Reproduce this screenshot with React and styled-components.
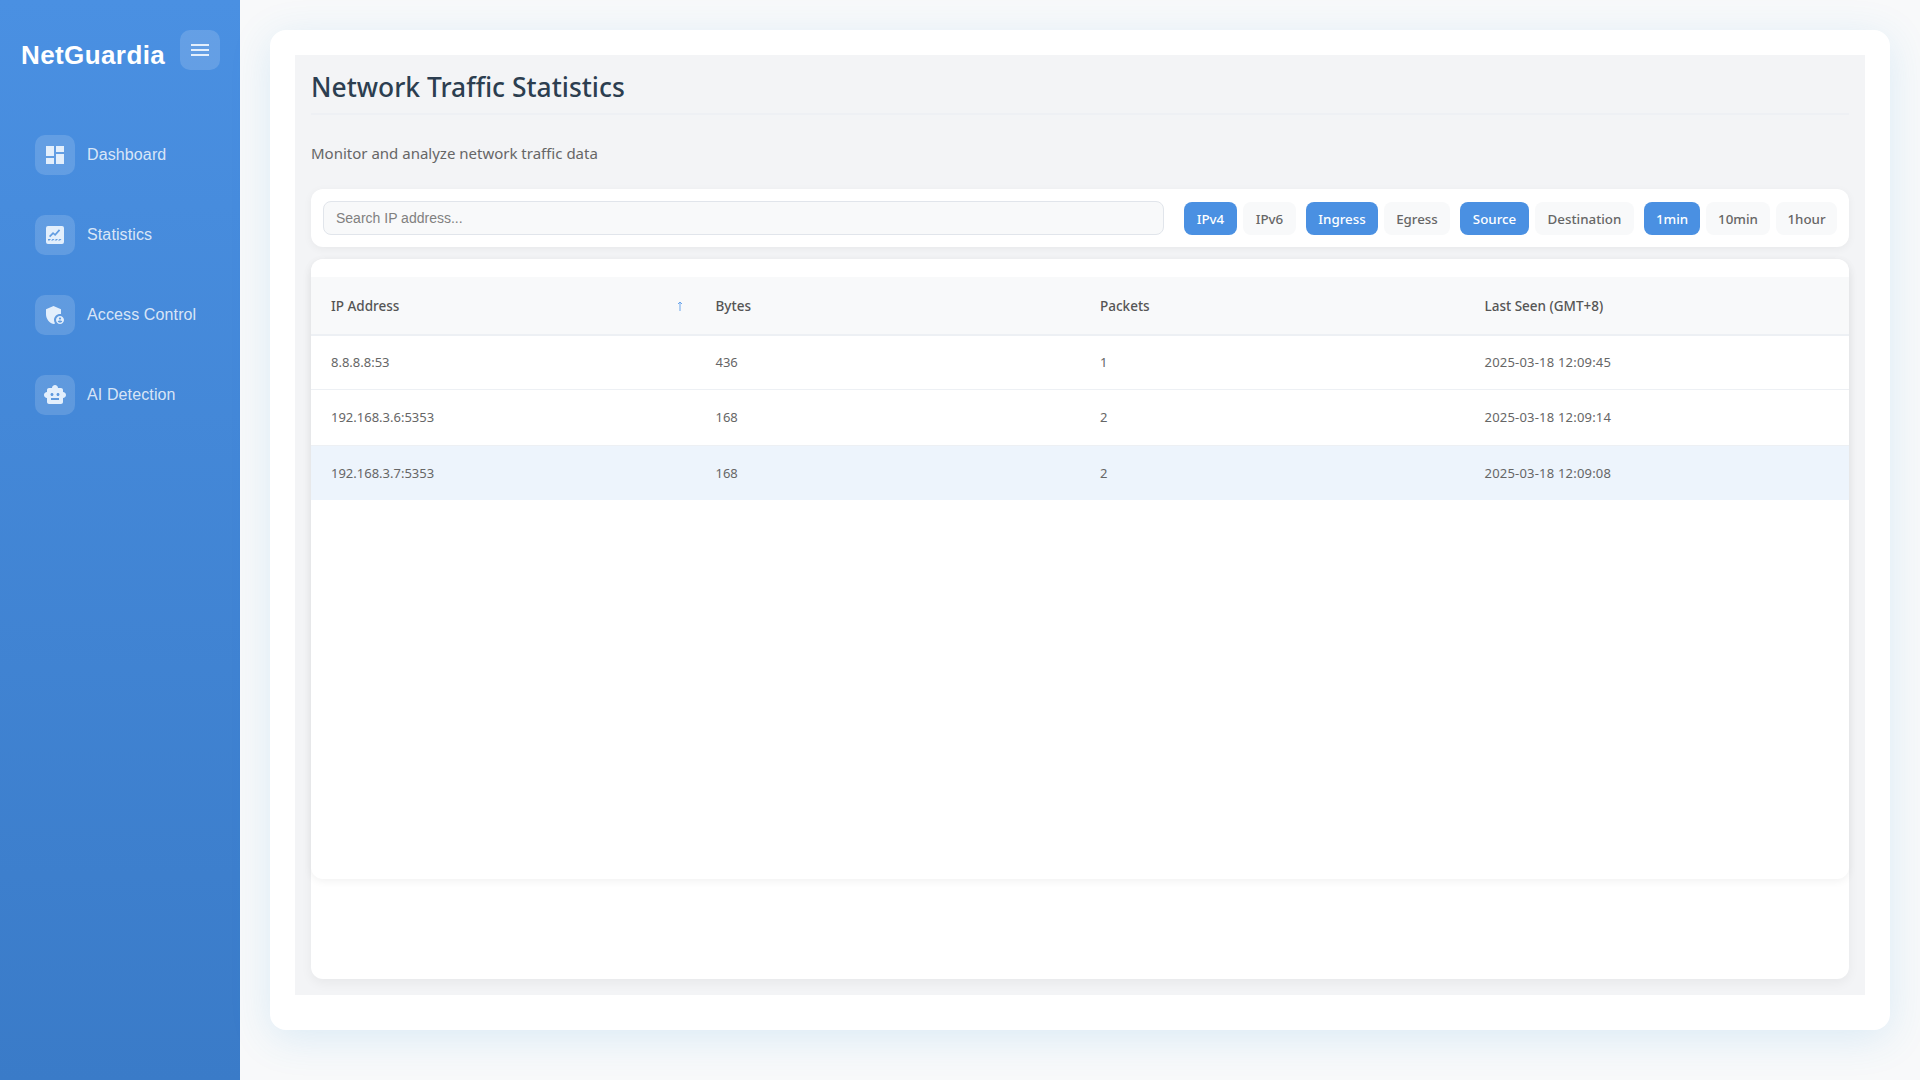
import styled, { createGlobalStyle } from 'styled-components';
import { MdDashboard, MdAdminPanelSettings, MdSmartToy } from 'react-icons/md';

const GlobalStyle = createGlobalStyle`
  html, body {
    margin: 0;
    padding: 0;
    height: 100%;
  }
  body {
    font-family: "Noto Sans", "Open Sans", sans-serif;
    background: #f8f9fa;
  }
  * {
    box-sizing: border-box;
  }
`;

const Layout = styled.div`
  display: flex;
  height: 1080px;
  overflow: hidden;
  background: #f8f9fa;
`;

const Sidebar = styled.aside`
  width: 240px;
  flex: none;
  background: linear-gradient(180deg, #4a90e2 0%, #3a7bc8 100%);
  font-family: "Liberation Sans", Arial, sans-serif;
`;

const Brand = styled.div`
  display: flex;
  align-items: flex-start;
  justify-content: space-between;
  height: 135px;
  padding: 30px 20px 0 21px;
`;

const Logo = styled.h1`
  margin: 9px 0 0;
  font-size: 26px;
  line-height: 32px;
  font-weight: 700;
  color: #fff;
  letter-spacing: 0.4px;
`;

const IconBox = styled.span`
  display: flex;
  align-items: center;
  justify-content: center;
  width: 40px;
  height: 40px;
  flex: none;
  border-radius: 10px;
  background: rgba(255, 255, 255, 0.15);
  color: #e3effc;
  font-size: 24px;
`;

const Nav = styled.nav`
  display: flex;
  flex-direction: column;
  gap: 40px;
  padding-left: 35px;
`;

const NavItem = styled.a`
  display: flex;
  align-items: center;
  gap: 12px;
  height: 40px;
  font-size: 16px;
  letter-spacing: 0.12px;
  color: rgba(255, 255, 255, 0.8);
`;

const Main = styled.main`
  flex: 1;
  min-width: 0;
  padding: 30px 30px 50px;
`;

const Card = styled.div`
  height: 1000px;
  padding: 25px 25px 35px;
  background: #fff;
  border-radius: 16px;
  box-shadow: 0 8px 40px rgba(52, 152, 219, 0.15);
`;

const Page = styled.div`
  height: 100%;
  padding: 16px;
  background: #f3f4f6;
  display: flex;
  flex-direction: column;
`;

const Title = styled.h2`
  margin: 0;
  height: 44px;
  flex: none;
  font-size: 26.4px;
  line-height: 32px;
  font-weight: 500;
  color: #2c3e50;
  border-bottom: 2px solid #eef0f4;
`;

const Subtitle = styled.p`
  margin: 27px 0 25px;
  font-size: 15px;
  line-height: 22px;
  color: #666;
`;

const FilterBar = styled.div`
  display: flex;
  align-items: center;
  flex: none;
  height: 58px;
  padding: 0 12px;
  background: #fff;
  border-radius: 12px;
  box-shadow: 0 2px 8px rgba(0, 0, 0, 0.05);
`;

const Search = styled.input`
  flex: 1;
  min-width: 0;
  height: 34px;
  margin-right: 20px;
  padding: 0 12px;
  border: 1px solid #e1e5eb;
  border-radius: 8px;
  background: #f8f9fa;
  font-family: "Liberation Sans", Arial, sans-serif;
  font-size: 14px;
  color: #333;
  &::placeholder {
    color: #808080;
  }
`;

const Group = styled.div`
  display: flex;
  gap: 6px;
  margin-left: ${(p) => (p.$first ? 0 : '10px')};
`;

const Pill = styled.button`
  width: ${(p) => p.$w}px;
  height: 33px;
  padding: 0;
  border: 0;
  border-radius: 8px;
  font-family: inherit;
  font-size: 13.33px;
  line-height: 34px;
  font-weight: 500;
  background: ${(p) => (p.$active ? '#4a90e2' : '#f8f9fa')};
  color: ${(p) => (p.$active ? '#fff' : '#666')};
`;

const TableCard = styled.div`
  flex: 1;
  margin-top: 12px;
  background: #fff;
  border-radius: 12px;
  box-shadow: 0 4px 12px rgba(0, 0, 0, 0.05);
`;

const TablePanel = styled.div`
  height: 620px;
  padding-top: 18px;
  background: #fff;
  border-radius: 12px;
  box-shadow: 0 2px 8px rgba(0, 0, 0, 0.06);
`;

const Table = styled.table`
  width: 100%;
  border-collapse: separate;
  border-spacing: 0;
  table-layout: fixed;
  font-size: 13px;
`;

const HeadCell = styled.th`
  position: relative;
  height: 59px;
  padding: 1px 20px 0;
  background: #f8f9fa;
  border-bottom: 2px solid #edf0f4;
  text-align: left;
  font-size: 13.5px;
  font-weight: 500;
  color: #555;
`;

const SortMark = styled.svg`
  position: absolute;
  right: 13px;
  top: 24px;
  color: #6aa5eb;
`;

const Row = styled.tr`
  background: ${(p) => (p.$selected ? '#edf4fc' : '#fff')};
`;

const Cell = styled.td`
  height: ${(p) => p.$h}px;
  padding: 0 20px ${(p) => (p.$last ? 0 : '2px')};
  border-bottom: ${(p) => (p.$last ? 0 : '1px solid #edf0f4')};
  letter-spacing: ${(p) => (p.$date ? '0.2px' : 'normal')};
  color: #666;
`;

// no package icon has the hatched area under the line, so it is drawn here
const StatsIcon = () => (
  <svg width="18" height="18" viewBox="0 0 18 18">
    <path
      fill="currentColor"
      fillRule="evenodd"
      d="M2 0h14a2 2 0 0 1 2 2v14a2 2 0 0 1-2 2H2a2 2 0 0 1-2-2V2a2 2 0 0 1 2-2zM3 10l1.200 1.300 3-3 2 1.700 5-5.600-1.300-1.100-3.900 4.400-2-1.700L3 10zM2 13v1.500h1.500L5 13H3.500zm4.500 0L5 14.500h2L8.500 13zm3.500 0-1.500 1.500h2L12 13zm3.500 0-1.500 1.500h2L15.500 13z"
    />
  </svg>
);

const MenuIcon = () => (
  <svg width="18" height="14" viewBox="0 0 18 14" fill="none" stroke="currentColor" strokeWidth="2">
    <path d="M0 2h18M0 7h18M0 12h18" />
  </svg>
);

const navItems = [
  { label: 'Dashboard', icon: <MdDashboard /> },
  { label: 'Statistics', icon: <StatsIcon /> },
  { label: 'Access Control', icon: <MdAdminPanelSettings /> },
  { label: 'AI Detection', icon: <MdSmartToy /> },
];

const filters = [
  [{ label: 'IPv4', w: 53 }, { label: 'IPv6', w: 53 }],
  [{ label: 'Ingress', w: 72 }, { label: 'Egress', w: 66 }],
  [{ label: 'Source', w: 69 }, { label: 'Destination', w: 99 }],
  [{ label: '1min', w: 56 }, { label: '10min', w: 64 }, { label: '1hour', w: 61 }],
];

const rows = [
  { ip: '8.8.8.8:53', bytes: '436', packets: '1', seen: '2025-03-18 12:09:45', h: 54 },
  { ip: '192.168.3.6:5353', bytes: '168', packets: '2', seen: '2025-03-18 12:09:14', h: 56 },
  { ip: '192.168.3.7:5353', bytes: '168', packets: '2', seen: '2025-03-18 12:09:08', h: 54, selected: true },
];

export default function App() {
  return (
    <Layout>
      <GlobalStyle />
      <Sidebar>
        <Brand>
          <Logo>NetGuardia</Logo>
          <IconBox><MenuIcon /></IconBox>
        </Brand>
        <Nav>
          {navItems.map((item) => (
            <NavItem key={item.label}>
              <IconBox>{item.icon}</IconBox>
              {item.label}
            </NavItem>
          ))}
        </Nav>
      </Sidebar>
      <Main>
        <Card>
          <Page>
            <Title>Network Traffic Statistics</Title>
            <Subtitle>Monitor and analyze network traffic data</Subtitle>
            <FilterBar>
              <Search placeholder="Search IP address..." />
              {filters.map((group, i) => (
                <Group key={group[0].label} $first={i === 0}>
                  {group.map((pill, j) => (
                    <Pill key={pill.label} $w={pill.w} $active={j === 0}>{pill.label}</Pill>
                  ))}
                </Group>
              ))}
            </FilterBar>
            <TableCard>
              <TablePanel>
                <Table>
                  <thead>
                    <tr>
                      <HeadCell>
                        IP Address
                        <SortMark width="6" height="10" viewBox="0 0 6 10" fill="none" stroke="currentColor">
                          <path d="M3 10V1M1 3l2-2 2 2" />
                        </SortMark>
                      </HeadCell>
                      <HeadCell>Bytes</HeadCell>
                      <HeadCell>Packets</HeadCell>
                      <HeadCell>Last Seen (GMT+8)</HeadCell>
                    </tr>
                  </thead>
                  <tbody>
                    {rows.map((row, i) => {
                      const last = i === rows.length - 1;
                      return (
                        <Row key={row.ip} $selected={row.selected}>
                          <Cell $h={row.h} $last={last}>{row.ip}</Cell>
                          <Cell $h={row.h} $last={last}>{row.bytes}</Cell>
                          <Cell $h={row.h} $last={last}>{row.packets}</Cell>
                          <Cell $h={row.h} $last={last} $date>{row.seen}</Cell>
                        </Row>
                      );
                    })}
                  </tbody>
                </Table>
              </TablePanel>
            </TableCard>
          </Page>
        </Card>
      </Main>
    </Layout>
  );
}
